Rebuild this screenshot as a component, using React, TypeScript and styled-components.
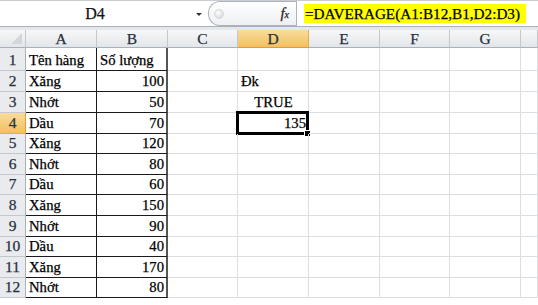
import React from 'react';
import styled, { createGlobalStyle, css } from 'styled-components';

const Global = createGlobalStyle`
  html, body { margin: 0; padding: 0; background: #fff; }
  body { font-family: "Liberation Serif", "Times New Roman", "DejaVu Serif", serif; overflow: hidden; }
`;

const SERIF = `"Liberation Serif", "Times New Roman", "DejaVu Serif", serif`;

const Window = styled.div`
  width: 538px;
  height: 305px;
  overflow: hidden;
  background: #fff;
  display: flex;
  flex-direction: column;
  font-family: ${SERIF};
  -webkit-text-stroke: 0.25px currentColor;
`;

const TopBar = styled.div`
  height: 25px;
  display: flex;
  border-top: 1px solid #c9cdd2;
  background: #fff;
`;

const NameBox = styled.div`
  width: 190px;
  display: flex;
  align-items: center;
  justify-content: center;
  font-family: ${SERIF};
  font-size: 16px;
  color: #111;
  padding-top: 1px;
`;

const DropArrow = styled.div`
  width: 18px;
  display: flex;
  align-items: center;
  justify-content: center;
  &::after {
    content: '';
    border-left: 3px solid transparent;
    border-right: 3px solid transparent;
    border-top: 3px solid #333;
    margin-top: 2px;
  }
`;

const Capsule = styled.div`
  width: 88px;
  display: flex;
  align-items: center;
  justify-content: space-between;
  border: 1px solid #aeb3ba;
  border-right: none;
  border-radius: 12px 0 0 12px;
  background: linear-gradient(#ffffff, #eef0f3);
  padding: 0 5px 0 5px;
  box-sizing: border-box;
`;

const Grip = styled.div`
  width: 8px;
  height: 8px;
  border-radius: 50%;
  background: radial-gradient(circle at 40% 35%, #ffffff, #c9ced6);
  border: 1px solid #d5d9de;
`;

const Fx = styled.div`
  font-family: ${SERIF};
  font-size: 15px;
  font-style: italic;
  color: #222;
  display: flex;
  align-items: baseline;
  margin-right: 2px;
  & > span { font-size: 10px; }
`;

const FormulaInput = styled.div`
  flex: 1;
  border-left: 1px solid #aeb3ba;
  display: flex;
  align-items: center;
  padding-left: 7px;
`;

const Highlight = styled.div`
  background: #ffff00;
  height: 19px;
  width: 222px;
  display: flex;
  align-items: center;
  padding-left: 1px;
  box-sizing: border-box;
  font-family: ${SERIF};
  font-size: 15.2px;
  color: #000;
  white-space: nowrap;
`;

const Strip = styled.div`
  height: 4px;
  border-top: 1px solid #a9b0b8;
  background: #e4e8ed;
  box-sizing: border-box;
`;

const ROW_H = [23, 21, 21, 21, 20, 21, 20, 21, 21, 20, 21, 20];
const COL_W = [71, 71, 70, 71, 71, 70, 71];

const Sheet = styled.div`
  display: grid;
  grid-template-columns: 26px ${COL_W.map((w) => w + 'px').join(' ')} 1fr;
  grid-template-rows: 18px ${ROW_H.map((h) => h + 'px').join(' ')} 1fr;
  font-family: ${SERIF};
`;

const headerBg = css<{ $sel?: boolean }>`
  background: ${(p) =>
    p.$sel
      ? 'linear-gradient(#f9dc9b, #f1c15f)'
      : 'linear-gradient(#f6f7f8, #e3e6ea)'};
`;

const Corner = styled.div`
  background: linear-gradient(#f6f7f8, #e3e6ea);
  border-right: 1px solid #c3c8cf;
  border-bottom: 1px solid #a9b0b8;
  position: relative;
  &::after {
    content: '';
    position: absolute;
    right: 3px;
    bottom: 3px;
    border-left: 11px solid transparent;
    border-bottom: 11px solid #d3d7dc;
  }
`;

const ColHead = styled.div<{ $sel?: boolean }>`
  ${headerBg};
  border-right: 1px solid ${(p) => (p.$sel ? '#e0ad4f' : '#c3c8cf')};
  border-bottom: 1px solid ${(p) => (p.$sel ? '#f29436' : '#a9b0b8')};
  display: flex;
  align-items: center;
  justify-content: center;
  font-family: ${SERIF};
  font-size: 15.5px;
  color: #27313d;
  padding-top: 1px;
`;

const RowHead = styled.div<{ $sel?: boolean }>`
  background: ${(p) => (p.$sel ? 'linear-gradient(#f9dc9b, #f1c15f)' : '#e9ebee')};
  border-right: 1px solid ${(p) => (p.$sel ? '#f29436' : '#a9b0b8')};
  border-bottom: 1px solid ${(p) => (p.$sel ? '#e0ad4f' : '#c3c8cf')};
  display: flex;
  align-items: flex-end;
  justify-content: center;
  padding-bottom: 1px;
  font-family: ${SERIF};
  font-size: 15.5px;
  color: #27313d;
`;

type Align = 'left' | 'right' | 'center';

const Cell = styled.div<{ $align?: Align; $line?: string; $vline?: string; $vw?: number }>`
  position: relative;
  border-right: ${(p) => p.$vw ?? 1}px solid ${(p) => p.$vline ?? '#dcdee1'};
  border-bottom: 1px solid ${(p) => p.$line ?? '#dcdee1'};
  display: flex;
  align-items: flex-end;
  justify-content: ${(p) =>
    p.$align === 'right' ? 'flex-end' : p.$align === 'center' ? 'center' : 'flex-start'};
  padding: 0 2px 1px 3px;
  font-family: ${SERIF};
  font-size: 14.7px;
  line-height: 18px;
  color: #000;
  white-space: nowrap;
  overflow: visible;
`;

const Selection = styled.div`
  position: absolute;
  left: -2px;
  top: -2px;
  right: -1px;
  bottom: -2px;
  border: 3px solid #000;
  pointer-events: none;
  &::after {
    content: '';
    position: absolute;
    right: -5px;
    bottom: -5px;
    width: 5px;
    height: 5px;
    background: #000;
    border: 1px solid #fff;
  }
`;

const names = ['Tên hàng', 'Xăng', 'Nhớt', 'Dầu', 'Xăng', 'Nhớt', 'Dầu', 'Xăng', 'Nhớt', 'Dầu', 'Xăng', 'Nhớt'];
const qty = ['Số lượng', '100', '50', '70', '120', '80', '60', '150', '90', '40', '170', '80'];
const letters = ['A', 'B', 'C', 'D', 'E', 'F', 'G', ''];

export default function App() {
  const rows = ROW_H.map((_, r) => r);
  return (
    <Window>
      <Global />
      <TopBar>
        <NameBox>D4</NameBox>
        <DropArrow />
        <Capsule>
          <Grip />
          <Fx>
            f<span>x</span>
          </Fx>
        </Capsule>
        <FormulaInput>
          <Highlight>=DAVERAGE(A1:B12,B1,D2:D3)</Highlight>
        </FormulaInput>
      </TopBar>
      <Strip />
      <Sheet>
        <Corner />
        {letters.map((l, i) => (
          <ColHead key={i} $sel={l === 'D'}>
            {l}
          </ColHead>
        ))}
        {rows.map((r) => (
          <React.Fragment key={r}>
            <RowHead $sel={r === 3}>{r + 1}</RowHead>
            <Cell $line="#1a1a1a" $vline="#1a1a1a">
              {names[r]}
            </Cell>
            <Cell $align={r === 0 ? 'left' : 'right'} $line="#1a1a1a" $vline="#555" $vw={2}>
              {qty[r]}
            </Cell>
            <Cell />
            <Cell $align={r === 2 ? 'center' : r === 3 ? 'right' : 'left'}>
              {r === 1 ? 'Đk' : r === 2 ? 'TRUE' : r === 3 ? '135' : ''}
              {r === 3 && <Selection />}
            </Cell>
            <Cell />
            <Cell />
            <Cell />
            <Cell />
          </React.Fragment>
        ))}
      </Sheet>
    </Window>
  );
}
